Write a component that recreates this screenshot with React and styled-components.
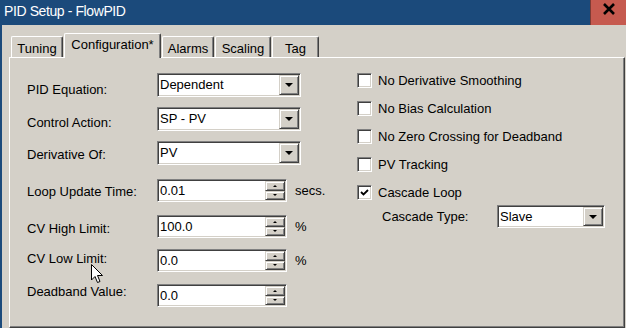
import React from 'react';
import styled, { createGlobalStyle } from 'styled-components';

const GlobalStyle = createGlobalStyle`
  body {
    margin: 0;
    background: #d4d0c8;
  }
  * {
    box-sizing: border-box;
  }
`;

const Window = styled.div`
  position: relative;
  width: 626px;
  height: 328px;
  display: flex;
  flex-direction: column;
  overflow: hidden;
  background: #d4d0c8;
  font-family: "Liberation Sans", Arial, sans-serif;
  font-size: 13px;
  color: #000;
`;

const TitleBar = styled.div`
  height: 25px;
  flex: none;
  display: flex;
  justify-content: space-between;
  background: #1b4a7b;
`;

const Title = styled.div`
  color: #fff;
  font-size: 14px;
  letter-spacing: -0.4px;
  line-height: 16px;
  padding: 3px 0 0 4px;
`;

const CloseButton = styled.div`
  width: 36px;
  background: #c65a4f;
  border-left: 1px solid #7d3b34;
  display: flex;
  justify-content: center;
  padding-top: 3px;
`;

const Body = styled.div`
  flex: 1;
  display: flex;
  flex-direction: column;
  border-left: 2px solid #1b4a7b;
  padding: 8px 1px 0 7px;
`;

const TabRow = styled.div`
  height: 24px;
  flex: none;
  display: flex;
  align-items: flex-end;
  gap: 1px;
  padding-left: 2px;
`;

const Tab = styled.div`
  position: relative;
  z-index: ${p => (p.$active ? 2 : 1)};
  width: ${p => p.$w}px;
  height: ${p => (p.$active ? 25 : 21)}px;
  margin-bottom: ${p => (p.$active ? -1 : 0)}px;
  background: #d4d0c8;
  border-top: 1px solid #fff;
  border-left: 1px solid #fff;
  border-right: 1px solid #404040;
  border-radius: 2px 2px 0 0;
  box-shadow: inset -1px 0 0 #808080;
  text-align: center;
  line-height: 15px;
  padding-top: ${p => (p.$active ? 3 : 4)}px;
  white-space: nowrap;
`;

const Panel = styled.div`
  flex: 1;
  display: grid;
  grid-template-columns: 330px 1fr;
  align-content: start;
  padding: 15px 0 0 17px;
  border-top: 1px solid #fff;
  border-left: 1px solid #fff;
  border-right: 1px solid #404040;
  border-bottom: 1px solid #404040;
  box-shadow: inset -1px -1px 0 #808080;
`;

const Column = styled.div`
  display: flex;
  flex-direction: column;
  gap: ${p => p.$gap || 0}px;
`;

const Row = styled.div`
  display: flex;
  align-items: flex-start;
  height: ${p => (p.$pitch ? `${p.$pitch}px` : 'auto')};
`;

const Label = styled.div`
  width: ${p => p.$w || 130}px;
  flex: none;
  margin-top: ${p => p.$dy || 0}px;
  line-height: 15px;
  white-space: nowrap;
`;

const Sunken = styled.div`
  width: ${p => p.$w}px;
  height: ${p => p.$h}px;
  flex: none;
  display: flex;
  background: #fff;
  border: 1px solid;
  border-color: #808080 #fff #fff #808080;
  box-shadow: inset 1px 1px 0 #404040, inset -1px -1px 0 #d4d0c8;
  padding: 1px;
`;

const FieldText = styled.div`
  flex: 1;
  padding-left: 1px;
  line-height: ${p => p.$lh}px;
  white-space: nowrap;
`;

const Raised = styled.div`
  width: 20px;
  flex: ${p => (p.$fill ? '1' : 'none')};
  background: #d4d0c8;
  border: 1px solid;
  border-color: #d4d0c8 #404040 #404040 #d4d0c8;
  box-shadow: inset 1px 1px 0 #fff, inset -1px -1px 0 #808080;
  display: flex;
  align-items: center;
  justify-content: center;
`;

const SpinButtons = styled.div`
  width: 20px;
  flex: none;
  display: flex;
  flex-direction: column;
`;

const Arrow = styled.span`
  width: 0;
  height: 0;
  border-left: ${p => p.$size}px solid transparent;
  border-right: ${p => p.$size}px solid transparent;
  ${p => (p.$up ? 'border-bottom' : 'border-top')}: ${p => p.$size}px solid #000;
`;

const Unit = styled.div`
  margin-left: 8px;
  line-height: 23px;
`;

const CheckRow = styled.div`
  display: flex;
  align-items: center;
  height: 15px;
  gap: 6px;
  white-space: nowrap;
`;

const CheckBox = styled.div`
  width: 15px;
  height: 15px;
  flex: none;
  background: #fff;
  border: 1px solid;
  border-color: #808080 #fff #fff #808080;
  box-shadow: inset 1px 1px 0 #404040, inset -1px -1px 0 #d4d0c8;
  display: flex;
  align-items: center;
  justify-content: center;
`;

const SubRow = styled.div`
  display: flex;
  align-items: center;
  margin-top: 5px;
  padding-left: 25px;
`;

const Cursor = styled.svg`
  position: absolute;
  left: 91px;
  top: 264px;
`;

function ComboBox({ value, w, h = 24 }) {
  return (
    <Sunken $w={w} $h={h}>
      <FieldText $lh={h - 4}>{value}</FieldText>
      <Raised>
        <Arrow $size={4} />
      </Raised>
    </Sunken>
  );
}

function SpinBox({ value }) {
  return (
    <Sunken $w={130} $h={23}>
      <FieldText $lh={19}>{value}</FieldText>
      <SpinButtons>
        <Raised $fill>
          <Arrow $size={2.5} $up />
        </Raised>
        <Raised $fill>
          <Arrow $size={2.5} />
        </Raised>
      </SpinButtons>
    </Sunken>
  );
}

const tabs = [
  { name: 'Tuning', w: 52 },
  { name: 'Configuration*', w: 97, active: true },
  { name: 'Alarms', w: 52 },
  { name: 'Scaling', w: 56 },
  { name: 'Tag', w: 47 },
];

const fields = [
  { label: 'PID Equation:', combo: 'Dependent', pitch: 34, dy: 9 },
  { label: 'Control Action:', combo: 'SP - PV', pitch: 34, dy: 8 },
  { label: 'Derivative Of:', combo: 'PV', pitch: 38, dy: 6 },
  { label: 'Loop Update Time:', spin: '0.01', unit: 'secs.', pitch: 36, dy: 5 },
  { label: 'CV High Limit:', spin: '100.0', unit: '%', pitch: 34, dy: 6 },
  { label: 'CV Low Limit:', spin: '0.0', unit: '%', pitch: 35, dy: 2 },
  { label: 'Deadband Value:', spin: '0.0', dy: 0 },
];

const options = [
  { label: 'No Derivative Smoothing' },
  { label: 'No Bias Calculation' },
  { label: 'No Zero Crossing for Deadband' },
  { label: 'PV Tracking' },
  { label: 'Cascade Loop', checked: true },
];

export default function App() {
  return (
    <Window>
      <GlobalStyle />
      <TitleBar>
        <Title>PID Setup - FlowPID</Title>
        <CloseButton>
          <svg width="12" height="12" viewBox="0 0 12 12">
            <path d="M1 1 L11 11 M11 1 L1 11" stroke="#000" strokeWidth="2.6" />
          </svg>
        </CloseButton>
      </TitleBar>
      <Body>
        <TabRow>
          {tabs.map(t => (
            <Tab key={t.name} $w={t.w} $active={t.active}>
              {t.name}
            </Tab>
          ))}
        </TabRow>
        <Panel>
          <Column>
            {fields.map(f => (
              <Row key={f.label} $pitch={f.pitch}>
                <Label $dy={f.dy}>{f.label}</Label>
                {f.combo ? <ComboBox value={f.combo} w={144} /> : <SpinBox value={f.spin} />}
                {f.unit && <Unit>{f.unit}</Unit>}
              </Row>
            ))}
          </Column>
          <Column>
            <Column $gap={13}>
              {options.map(o => (
                <CheckRow key={o.label}>
                  <CheckBox>
                    {o.checked && (
                      <svg width="9" height="9" viewBox="0 0 9 9">
                        <path d="M1 4 L3.5 6.5 L8 2" fill="none" stroke="#000" strokeWidth="1.8" />
                      </svg>
                    )}
                  </CheckBox>
                  {o.label}
                </CheckRow>
              ))}
            </Column>
            <SubRow>
              <Label $w={115}>Cascade Type:</Label>
              <ComboBox value="Slave" w={108} h={23} />
            </SubRow>
          </Column>
        </Panel>
      </Body>
      <Cursor width="13" height="20" viewBox="0 0 13 20">
        <path d="M0.5 0.5 L0.5 16 L4 12.5 L6.5 18.5 L9 17.5 L6.5 11.5 L11.5 11.5 Z" fill="#fff" stroke="#000" strokeWidth="1" />
      </Cursor>
    </Window>
  );
}
